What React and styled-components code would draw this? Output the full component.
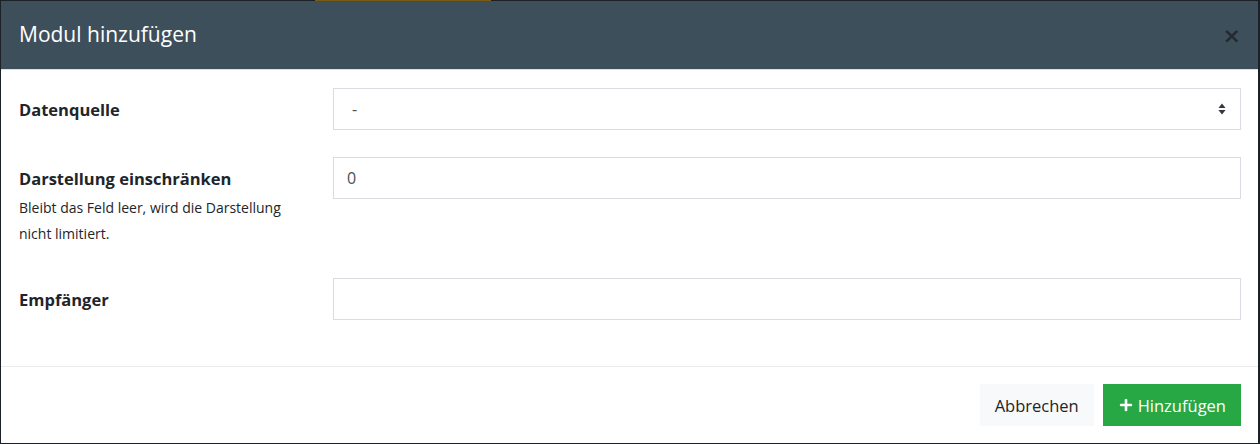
import React from "react";
import styled, { createGlobalStyle } from "styled-components";
import { FaPlus } from "react-icons/fa";

const Global = createGlobalStyle`
  html, body { margin: 0; padding: 0; }
  body {
    background: #1b2127;
    font-family: "Open Sans", "Noto Sans", sans-serif;
    color: #212529;
  }
  * { box-sizing: border-box; }
`;

const Backdrop = styled.div`
  width: 1260px;
  height: 444px;
  padding: 1px 2px 1px 1px;
  background-color: #1b2127;
  background-image: linear-gradient(#7a5a12, #7a5a12);
  background-size: 176px 1px;
  background-position: 315px 0;
  background-repeat: no-repeat;
  display: flex;
`;

const Modal = styled.div`
  flex: 1;
  background: #fff;
  display: flex;
  flex-direction: column;
`;

const Header = styled.div`
  height: 69px;
  flex: none;
  background: #3e4f5c;
  border-bottom: 1px solid #dbe0e4;
  display: flex;
  align-items: center;
  justify-content: space-between;
  padding: 0 17px 0 18px;
`;

const Title = styled.h5`
  margin: 0;
  color: #fff;
  font-size: 21px;
  font-weight: 400;
  line-height: 1.5;
`;

const Close = styled.button`
  background: none;
  border: 0;
  padding: 0;
  font-size: 22px;
  font-weight: 700;
  line-height: 1;
  color: #222b33;
  font-family: "DejaVu Sans", sans-serif;
  cursor: pointer;
  margin-top: 2px;
`;

const Body = styled.div`
  padding: 18px 17px 17px 18px;
  flex: 1;
`;

const Row = styled.div`
  display: grid;
  grid-template-columns: 314px 1fr;
  margin-bottom: 27px;
`;

const LabelCol = styled.div`
  display: flex;
  flex-direction: column;
  padding-right: 30px;
`;

const Label = styled.label`
  font-size: 16.5px;
  font-weight: 700;
  line-height: 22px;
  padding: 11px 0 9px;
  color: #212529;
`;

const Help = styled.small`
  display: block;
  font-size: 14px;
  line-height: 26px;
  margin-top: -4px;
  padding-bottom: 4px;
  color: #212529;
`;

const Field = styled.div`
  position: relative;
  height: 42px;
  border: 1px solid #d9dde2;
  background: #fff;
  display: flex;
  align-items: center;
  padding-left: ${(p) => (p.$select ? "18px" : "13px")};
  font-size: 16px;
  color: #495057;
`;

const Arrows = styled.svg`
  position: absolute;
  right: 14px;
  top: 50%;
  transform: translateY(-50%);
`;

const Footer = styled.div`
  border-top: 1px solid #e9ecef;
  padding: 17px 17px 17px 18px;
  display: flex;
  justify-content: flex-end;
  gap: 9px;
`;

const Button = styled.button`
  height: 42px;
  border: 0;
  padding: 0 ${(p) => (p.$primary ? "15px 0 16px" : "15px 0 15px")};
  font-family: "Open Sans", "Noto Sans", sans-serif;
  font-size: 16.5px;
  display: flex;
  align-items: center;
  gap: 5px;
  background: ${(p) => (p.$primary ? "#28a745" : "#f8f9fa")};
  color: ${(p) => (p.$primary ? "#fff" : "#212529")};
  cursor: pointer;
`;

export default function App() {
  return (
    <>
      <Global />
      <Backdrop>
        <Modal>
          <Header>
            <Title>Modul hinzufügen</Title>
            <Close aria-label="Schließen">×</Close>
          </Header>
          <Body>
            <Row>
              <LabelCol>
                <Label>Datenquelle</Label>
              </LabelCol>
              <Field $select>
                -
                <Arrows width="8" height="12" viewBox="0 0 8 12">
                  <path d="M4 0.5 L7.6 5 H0.4 Z M4 11.5 L7.6 7 H0.4 Z" fill="#343a40" />
                </Arrows>
              </Field>
            </Row>
            <Row>
              <LabelCol>
                <Label>Darstellung einschränken</Label>
                <Help>Bleibt das Feld leer, wird die Darstellung nicht limitiert.</Help>
              </LabelCol>
              <Field>0</Field>
            </Row>
            <Row>
              <LabelCol>
                <Label>Empfänger</Label>
              </LabelCol>
              <Field />
            </Row>
          </Body>
          <Footer>
            <Button>Abbrechen</Button>
            <Button $primary>
              <FaPlus size={14} />
              Hinzufügen
            </Button>
          </Footer>
        </Modal>
      </Backdrop>
    </>
  );
}
